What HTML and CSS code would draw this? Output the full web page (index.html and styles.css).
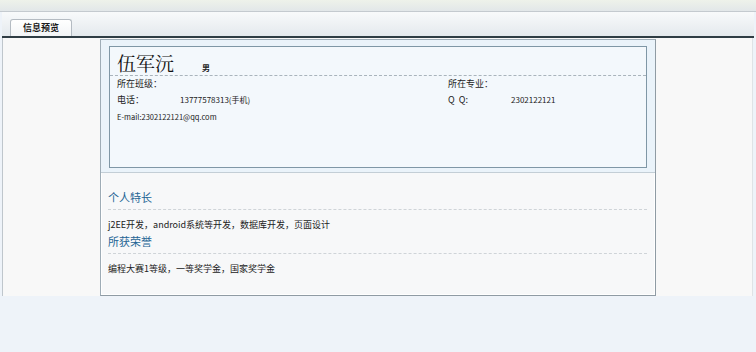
FILE: index.html
```html
<!DOCTYPE html>
<html lang="zh-CN">
<head>
    <meta charset="UTF-8">
    <title>信息预览</title>
    <link rel="stylesheet" href="styles.css">
</head>
<body>
    <div class="top-strip"></div>
    <div class="tab-bar">
        <div class="tab">信息预览</div>
    </div>
    <div class="panel">
        <div class="card">
            <div class="card-head">
                <div class="info-box">
                    <div class="name-row">
                        <span class="name">伍军沅</span>
                        <span class="sex">男</span>
                    </div>
                    <div class="info-grid">
                        <div class="info-row">
                            <span class="label">所在班级：</span>
                        </div>
                        <div class="info-row">
                            <span class="label">所在专业：</span>
                        </div>
                        <div class="info-row">
                            <span class="label">电话：</span>
                            <span class="value">13777578313(手机)</span>
                        </div>
                        <div class="info-row">
                            <span class="label">Q&nbsp;&nbsp;Q:</span>
                            <span class="value">2302122121</span>
                        </div>
                        <div class="info-row email">E-mail:2302122121@qq.com</div>
                    </div>
                </div>
            </div>
            <div class="card-body">
                <h3 class="sec-title">个人特长</h3>
                <p class="sec-text">j2EE开发，android系统等开发，数据库开发，页面设计</p>
                <h3 class="sec-title">所获荣誉</h3>
                <p class="sec-text">编程大赛1等级，一等奖学金，国家奖学金</p>
            </div>
        </div>
    </div>
</body>
</html>
```

FILE: styles.css
```css
body {
    margin: 0;
    background: #eef3f9;
    font-family: "Noto Sans CJK SC", "DejaVu Sans", sans-serif;
    font-size: 9px;
    color: #222;
}
.top-strip {
    height: 11px;
    background: linear-gradient(#eef2ea, #e2e7e9);
    border-bottom: 1px solid #c4cacf;
}
.tab-bar {
    display: flex;
    align-items: flex-end;
    height: 24px;
    margin: 0 2px 0 2px;
    padding-left: 8px;
    background: linear-gradient(#f8fafb, #e4e9ed);
    border-bottom: 2px solid #2f3d44;
}
.tab {
    width: 60px;
    height: 16px;
    line-height: 16px;
    text-align: center;
    font-weight: bold;
    color: #1a1a1a;
    background: linear-gradient(#ffffff, #f3f5f7);
    border: 1px solid #b4bbc2;
    border-bottom: none;
    border-radius: 3px 3px 0 0;
}
.panel {
    height: 258px;
    margin: 0 3px 0 2px;
    padding-top: 1px;
    background: #f8f8f8;
    border-left: 1px solid #bfc6cc;
    border-right: 1px solid #dfe3e6;
    box-sizing: border-box;
}
.card {
    width: 556px;
    height: 257px;
    margin-left: 97px;
    box-sizing: border-box;
    border: 1px solid #9eacb6;
    border-right-color: #8f9ba4;
    border-bottom-color: #8f9ba4;
    box-shadow: inset 0 0 0 1px #ffffff;
    background: #f7f8f9;
}
.card-head {
    height: 133px;
    padding: 6px 8px 0 8px;
    box-sizing: border-box;
    background: #eaf3fa;
    border-bottom: 1px solid #c3ced6;
}
.info-box {
    height: 122px;
    box-sizing: border-box;
    border: 1px solid #7f97a6;
    background: #f3f8fc;
}
.name-row {
    display: flex;
    align-items: baseline;
    height: 28px;
    padding-left: 7px;
    border-bottom: 1px dashed #a9b4bc;
}
.name {
    font-family: "Noto Serif CJK SC", "Noto Sans CJK SC", serif;
    font-size: 19px;
    line-height: 31px;
    color: #111;
}
.sex {
    margin-left: 28px;
    font-weight: bold;
    font-size: 8px;
}
.info-grid {
    display: grid;
    grid-template-columns: 331px 1fr;
    padding-left: 7px;
}
.info-row {
    display: flex;
    height: 16px;
    line-height: 15px;
}
.label {
    width: 63px;
    flex: none;
}
.value {
    font-size: 8px;
}
.email {
    grid-column: 1 / 3;
    font-size: 7.5px;
    line-height: 18px;
}
.card-body {
    padding: 16px 8px 0 7px;
}
.sec-title {
    margin: 0;
    padding-bottom: 3px;
    font-size: 11px;
    font-weight: normal;
    line-height: 17px;
    color: #236494;
    border-bottom: 1px dashed #cfd4d8;
}
.sec-text {
    margin: 0;
    height: 23px;
    line-height: 30px;
}
```
